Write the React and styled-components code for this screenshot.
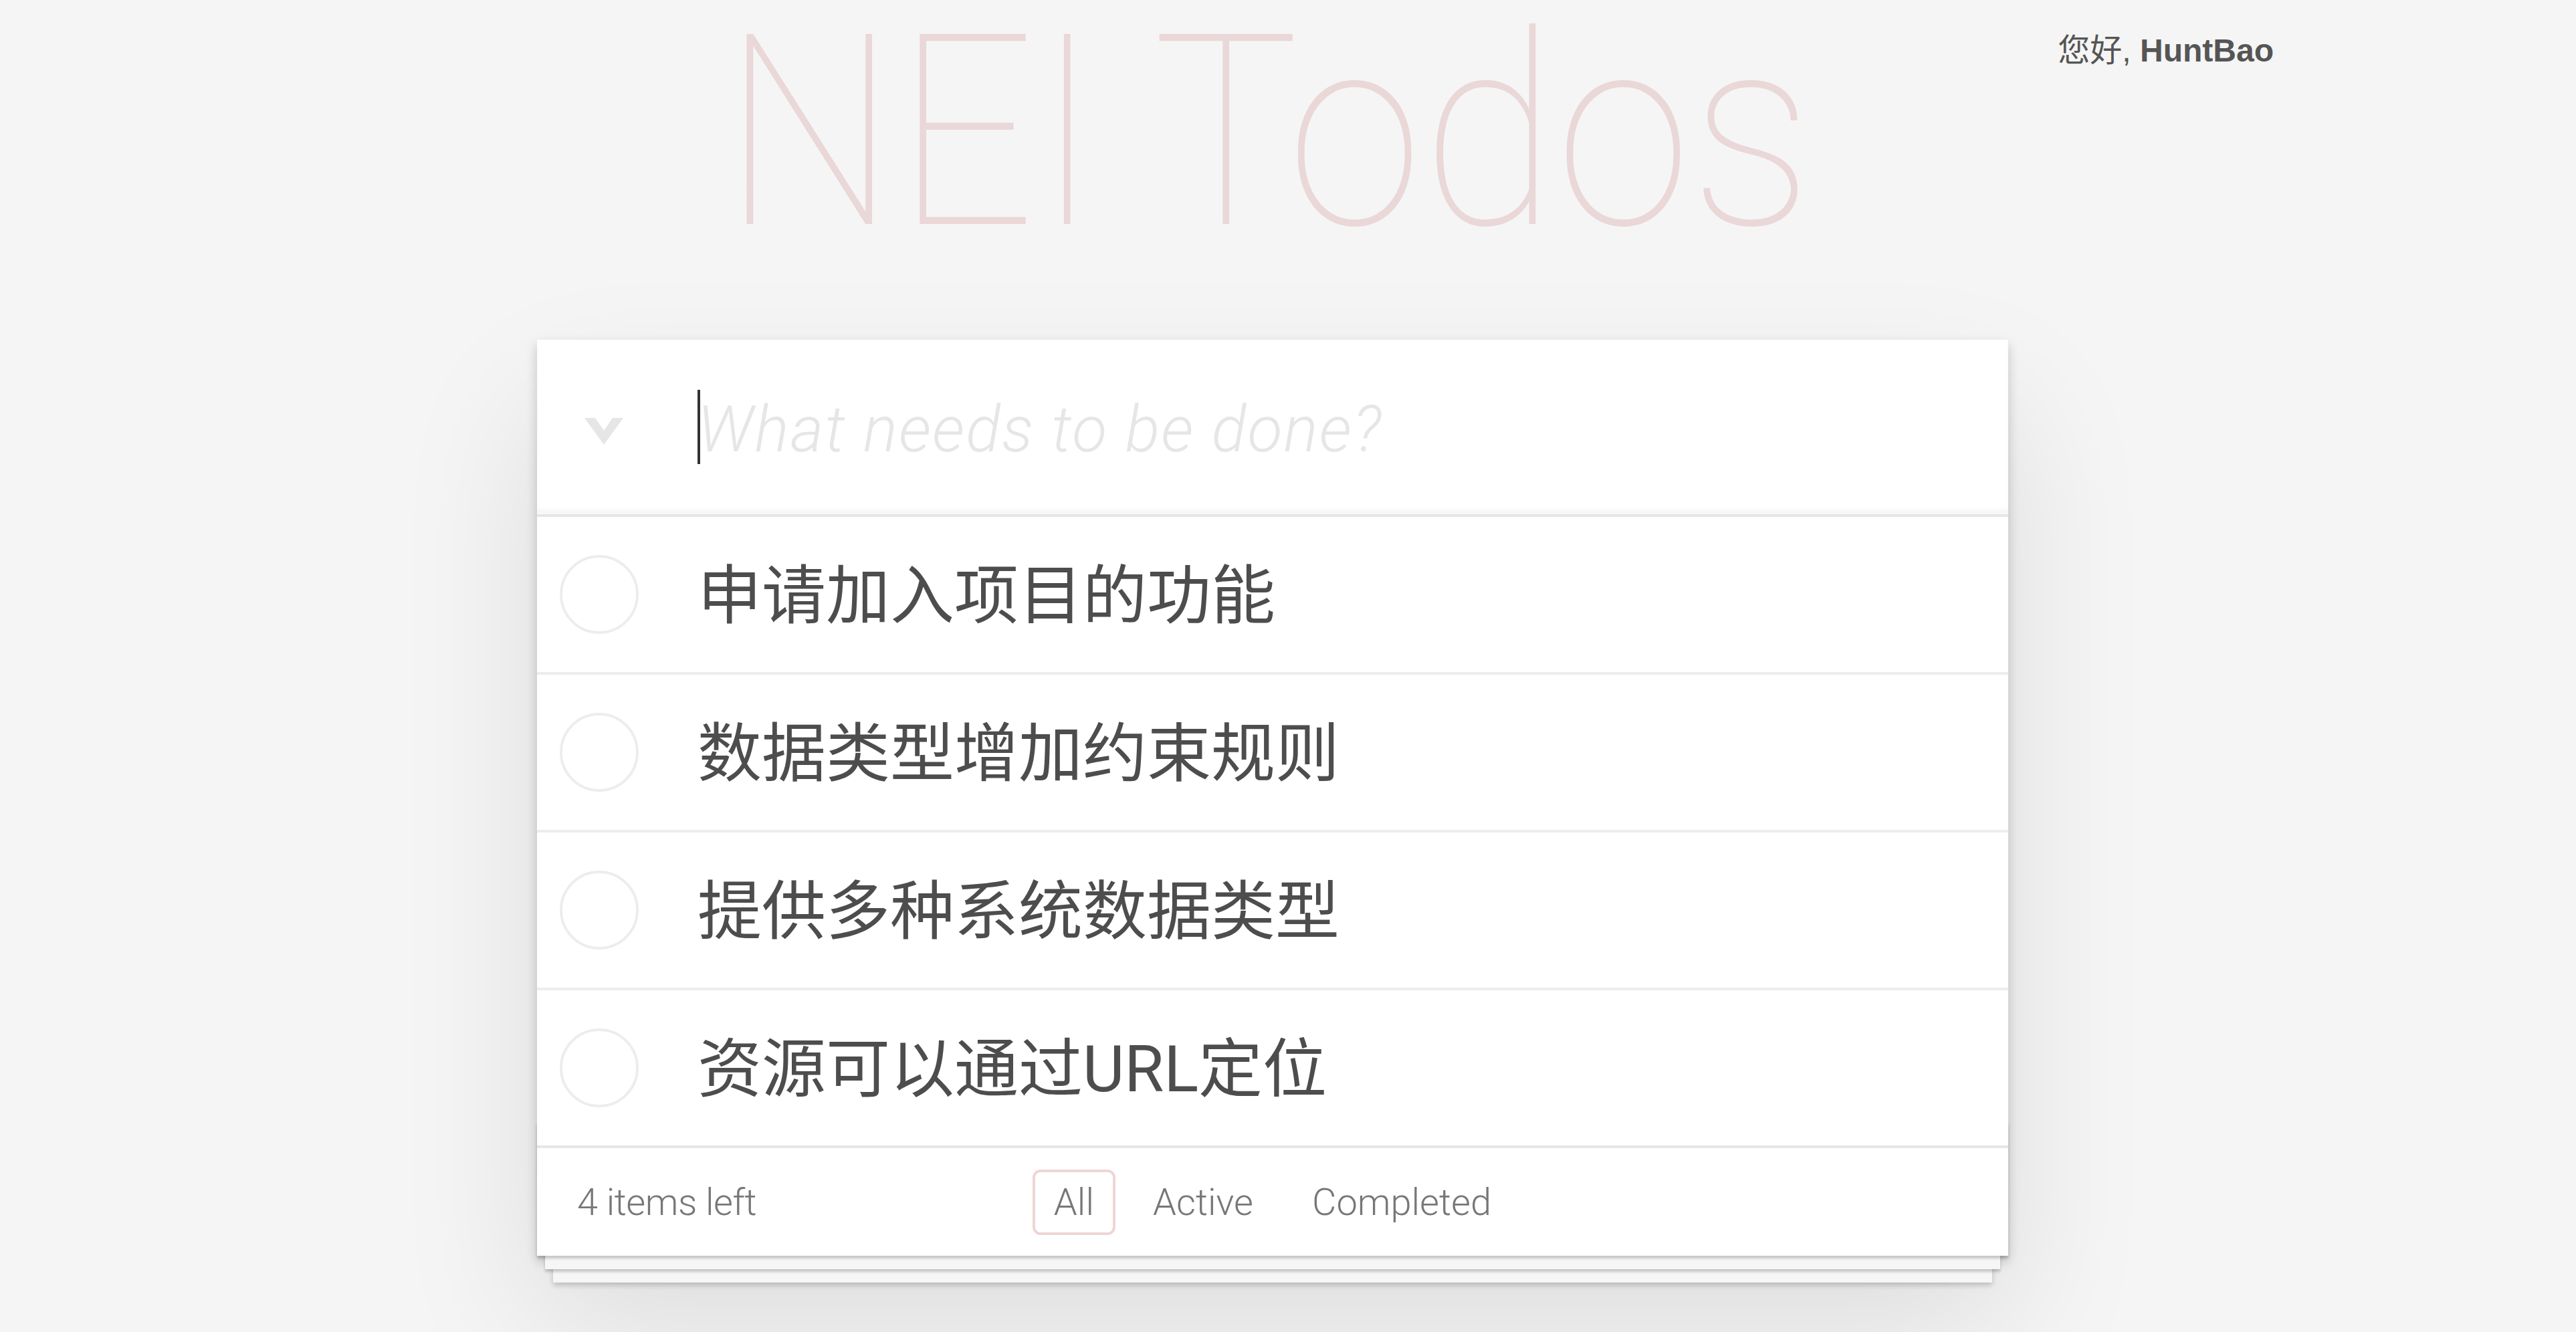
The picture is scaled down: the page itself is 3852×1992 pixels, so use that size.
import styled, { createGlobalStyle } from "styled-components";

const todos = [
  { id: 1, title: "申请加入项目的功能" },
  { id: 2, title: "数据类型增加约束规则" },
  { id: 3, title: "提供多种系统数据类型" },
  { id: 4, title: "资源可以通过URL定位" },
];

const filters = ["All", "Active", "Completed"];

const GlobalStyle = createGlobalStyle`
  html, body {
    margin: 0;
    padding: 0;
    background: #f5f5f5;
  }

  body {
    font-family: Roboto, "Noto Sans CJK SC", sans-serif;
    font-weight: 300;
    color: #4d4d4d;
  }
`;

const App = () => {
  return (
    <>
      <GlobalStyle />
      <Page>
        <Header>
          <div />
          <Title>NEI Todos</Title>
          <Greeting>
            您好, <b>HuntBao</b>
          </Greeting>
        </Header>

        <TodoApp>
          <NewTodoRow>
            <ToggleAll aria-label="toggle all">
              <svg width="58" height="40" viewBox="0 0 58 40">
                <polygon
                  points="0,0 16,0 29,19 42,0 58,0 29,40"
                  fill="#e6e6e6"
                />
              </svg>
            </ToggleAll>
            <InputWrap>
              <Caret />
              <NewTodo placeholder="What needs to be done?" />
            </InputWrap>
          </NewTodoRow>

          <Main>
            <TodoList>
              {todos.map((todo) => (
                <TodoItem key={todo.id}>
                  <Check />
                  <Label>{todo.title}</Label>
                </TodoItem>
              ))}
            </TodoList>
          </Main>

          <Footer>
            <Count>{todos.length} items left</Count>
            <Filters>
              {filters.map((name) => (
                <li key={name}>
                  <FilterLink href="#" $selected={name === "All"}>
                    {name}
                  </FilterLink>
                </li>
              ))}
            </Filters>
            <div />
          </Footer>
        </TodoApp>
      </Page>
    </>
  );
};

const Page = styled.div`
  padding-right: 46px;
  min-height: 1992px;
  box-sizing: border-box;
`;

const Header = styled.header`
  display: grid;
  grid-template-columns: 1fr auto 1fr;
  align-items: start;
`;

const Title = styled.h1`
  margin: 34px 0 0;
  font-family: Roboto, sans-serif;
  font-size: 400px;
  line-height: 330px;
  font-weight: 100;
  color: rgba(175, 47, 47, 0.15);
  text-align: center;
  white-space: nowrap;
  transform: translateX(-8px) scaleX(0.915);
`;

const Greeting = styled.div`
  justify-self: end;
  margin: 52px 406px 0 0;
  font-family: "Liberation Sans", "Noto Sans CJK SC", sans-serif;
  font-size: 48px;
  line-height: 48px;
  font-weight: 400;
  color: #555;
  white-space: nowrap;

  b {
    font-weight: 700;
  }
`;

const TodoApp = styled.section`
  position: relative;
  width: 2200px;
  margin: 144px auto 0;
  background: #fff;
  box-shadow: 0 8px 16px rgba(0, 0, 0, 0.2), 0 100px 200px rgba(0, 0, 0, 0.1);
`;

const NewTodoRow = styled.div`
  display: flex;
  align-items: center;
  height: 261px;
  box-shadow: inset 0 -8px 4px rgba(0, 0, 0, 0.03);
`;

const ToggleAll = styled.button`
  display: flex;
  align-items: center;
  justify-content: center;
  width: 200px;
  height: 100%;
  padding: 12px 0 0;
  border: none;
  background: none;
`;

const InputWrap = styled.div`
  position: relative;
  flex: 1;
  display: flex;
  align-items: center;
  height: 100%;
`;

const Caret = styled.span`
  position: absolute;
  left: 40px;
  top: 75px;
  width: 4px;
  height: 111px;
  background: #333;
`;

const NewTodo = styled.input`
  flex: 1;
  padding: 8px 40px 0;
  border: none;
  outline: none;
  background: transparent;
  font-family: Roboto, "Noto Sans CJK SC", sans-serif;
  font-size: 96px;
  line-height: 1.4;
  font-weight: 300;
  color: #4d4d4d;

  &::placeholder {
    font-style: italic;
    font-weight: 300;
    letter-spacing: 2px;
    color: #e6e6e6;
  }
`;

const Main = styled.section`
  border-top: 4px solid #e6e6e6;
`;

const TodoList = styled.ul`
  margin: 0;
  padding: 0;
  list-style: none;
`;

const TodoItem = styled.li`
  display: flex;
  align-items: center;
  gap: 88px;
  height: 236px;
  padding-left: 34px;
  box-sizing: border-box;
  border-bottom: 4px solid #ededed;

  &:last-child {
    height: 232px;
    border-bottom: none;
  }
`;

const Check = styled.span`
  flex: none;
  width: 118px;
  height: 118px;
  box-sizing: border-box;
  border: 4px solid #ededed;
  border-radius: 50%;
`;

const Label = styled.label`
  padding-top: 6px;
  font-size: 96px;
  line-height: 1.2;
  font-weight: 400;
  color: #4d4d4d;
  white-space: nowrap;
`;

const Footer = styled.footer`
  position: relative;
  display: grid;
  grid-template-columns: 1fr auto 1fr;
  align-items: center;
  height: 165px;
  padding: 0 60px;
  box-sizing: border-box;
  border-top: 4px solid #e6e6e6;
  font-size: 56px;
  color: #777;

  &::before {
    content: "";
    position: absolute;
    left: 0;
    right: 0;
    bottom: 0;
    height: 200px;
    overflow: hidden;
    pointer-events: none;
    box-shadow: 0 4px 4px rgba(0, 0, 0, 0.2), 0 32px 0 -12px #f6f6f6,
      0 36px 4px -12px rgba(0, 0, 0, 0.2), 0 64px 0 -24px #f6f6f6,
      0 68px 8px -24px rgba(0, 0, 0, 0.2);
  }
`;

const Count = styled.span`
  justify-self: start;
  letter-spacing: -0.5px;
`;

const Filters = styled.ul`
  display: flex;
  margin: 0;
  padding: 0;
  list-style: none;
`;

const FilterLink = styled.a`
  display: block;
  margin: 0 12px;
  padding: 12px 28px;
  border: 4px solid
    ${(props) => (props.$selected ? "rgba(175, 47, 47, 0.2)" : "transparent")};
  border-radius: 12px;
  color: inherit;
  text-decoration: none;
`;

export default App;
